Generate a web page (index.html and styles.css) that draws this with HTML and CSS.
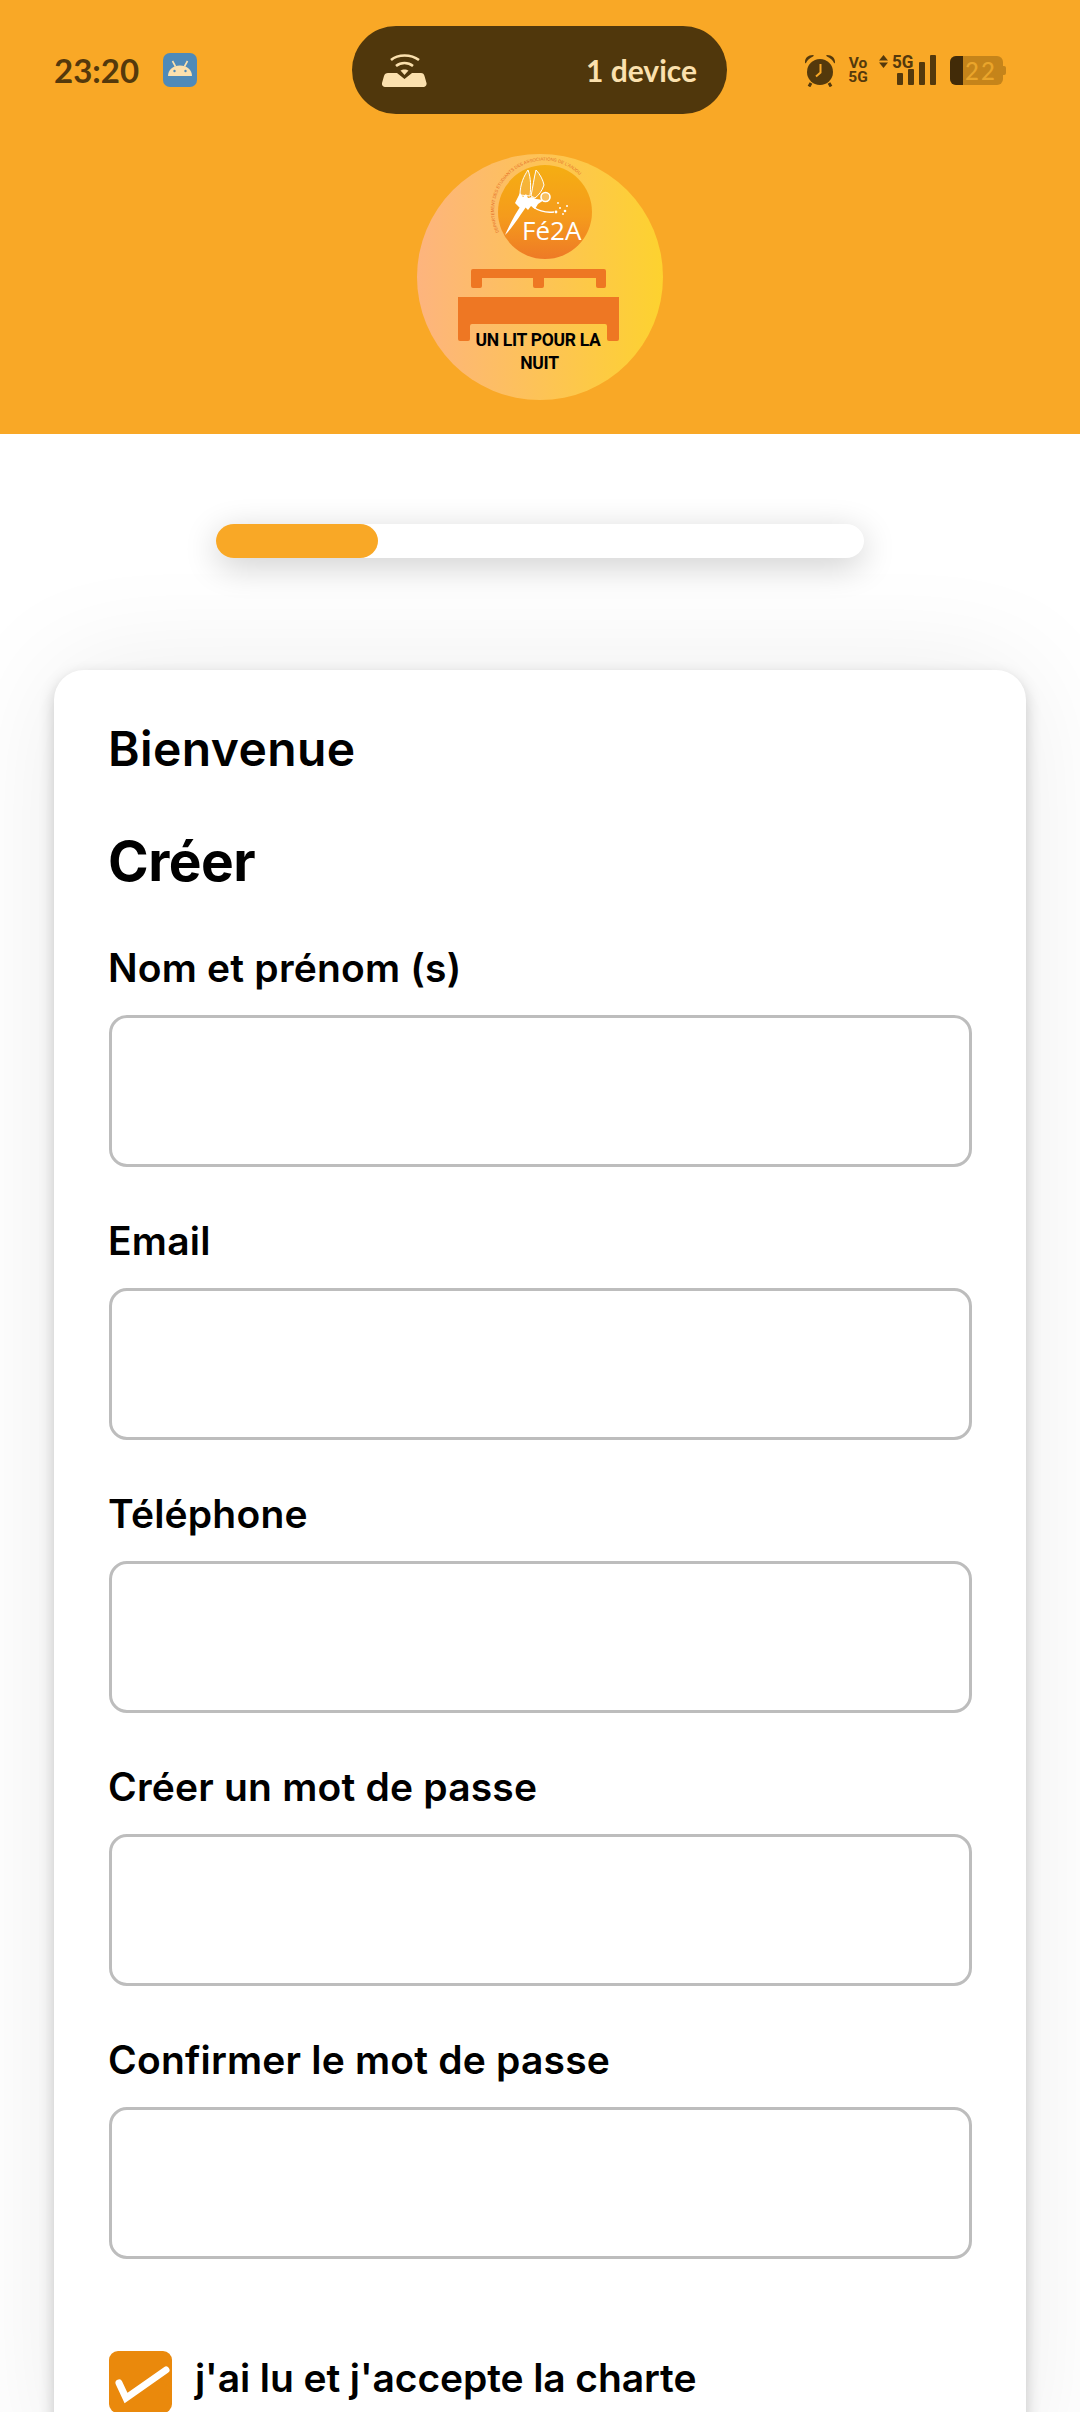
FILE: index.html
```html
<!DOCTYPE html>
<html lang="fr">
<head>
<meta charset="utf-8">
<title>Un lit pour la nuit</title>
<link rel="stylesheet" href="styles.css">
</head>
<body>
<header class="top">
  <div class="status">
    <div class="status-left">
      <span class="clock">23:20</span>
      <span class="app-icon">
        <svg viewBox="0 0 34 34" width="34" height="34"><rect width="34" height="34" rx="7" fill="#4f8ab9"/><path d="M5 23c0-6 5-10.500 12-10.500S29 17 29 23z" fill="#fbe0ae"/><path d="M9.500 8l3 5.500M24.500 8l-3 5.500" stroke="#fbe0ae" stroke-width="1.6"/><circle cx="11.500" cy="18" r="1.200" fill="#4f8ab9"/><circle cx="22.500" cy="18" r="1.200" fill="#4f8ab9"/></svg>
      </span>
    </div>
    <div class="pill">
      <svg viewBox="0 0 45 34" width="45" height="34"><path d="M9 7C16 1 29 1 37 7" fill="none" stroke="#fbe0ae" stroke-width="2.600"/><path d="M14 13c5-4 12-4 17 0" fill="none" stroke="#fbe0ae" stroke-width="2.600"/><path d="M18.500 17.500c2-1.500 6-1.500 8 0l-4 4.500z" fill="#fbe0ae"/><path d="M6 20h9l7.500 6 7.500-6h9c2 0 3 1 3.500 3l2 7c.5 2-1 4-3 4H3c-2 0-3.500-2-3-4l2-7c.5-2 2-3 4-3z" fill="#fbe0ae"/></svg>
      <span class="pill-text">1 device</span>
    </div>
    <div class="status-right">
      <svg class="alarm" viewBox="0 0 32 33" width="32" height="33"><circle cx="16" cy="18" r="13" fill="#54390c"/><path d="M1 8c0-4 3-7 8-7 1 0 1 1 0 1.500C6 4 3 6 2 9c-.5.500-1 .500-1-1zM31 8c0-4-3-7-8-7-1 0-1 1 0 1.500 3 1.500 6 3.500 7 6.500.5.500 1 .500 1-1z" fill="#54390c"/><path d="M16.500 10v8.500l-4.500 4" fill="none" stroke="#faa826" stroke-width="2"/><path d="M7 29l-2 3.500M25 29l2 3.500" stroke="#54390c" stroke-width="3"/></svg>
      <span class="volte"><span>Vo</span><span>5G</span></span>
      <span class="signal">
        <svg class="arrows" viewBox="0 0 9 13" width="9" height="13"><path d="M4.500 0L9 5.500H0zM0 7.500h9L4.500 13z" fill="#54390c"/></svg>
        <span class="five-g">5G</span>
        <span class="bars"><i class="b1"></i><i class="b2"></i><i class="b3"></i><i class="b4"></i></span>
      </span>
      <span class="battery"><span class="battery-level"></span><span class="battery-num">22</span><span class="battery-tip"></span></span>
    </div>
  </div>
  <div class="logo">
    <svg viewBox="0 0 246 246" width="246" height="246">
      <defs>
        <linearGradient id="bg" x1="0" x2="1" y1="0" y2="0"><stop offset="0" stop-color="#fdb47e"/><stop offset="1" stop-color="#fdd22f"/></linearGradient>
        <linearGradient id="ball" x1="0" x2="0" y1="0" y2="1"><stop offset="0" stop-color="#f5ae12"/><stop offset=".55" stop-color="#f59b1c"/><stop offset="1" stop-color="#ee7a26"/></linearGradient>
        <path id="arc" d="M82 78A50 50 0 0 1 166 25"/>
      </defs>
      <circle cx="123" cy="123" r="123" fill="url(#bg)"/>
      <circle cx="128" cy="58" r="47" fill="url(#ball)"/>
      <text class="arc-text"><textPath href="#arc" textLength="140" lengthAdjust="spacingAndGlyphs">DEPARTEMENT DES ETUDIANTS DES ASSOCIATIONS DE L'ANJOU</textPath></text>
      <path d="M103 41C103 30 107 22 111 16 114 24 114 33 113 42z" fill="#fff" fill-opacity=".15" stroke="#fff" stroke-width="1"/>
      <path d="M114 42C116 32 117 24 119 16 123 20 126 26 127 31 125 37 122 41 118 44z" fill="#fff" fill-opacity=".12" stroke="#fff" stroke-width="1"/>
      <path d="M98 49l5-10 3 4 3-3 2 4 4-1 4 2 8 1-6 4-3 5-4-3-3 4-4-4-3 3z" fill="#fff"/>
      <path d="M88 81C93 70 99 58 106 49l5 1C104 60 96 73 88 81z" fill="#fff"/>
      <path d="M116 53c6 4 13 6 21 5" fill="none" stroke="#fff" stroke-width="1.400"/>
      <circle cx="128.500" cy="43" r="4.500" fill="#f8c060" stroke="#fff" stroke-width="1.600"/>
      <g fill="#fff"><circle cx="139" cy="58" r="1.400"/><circle cx="143" cy="54" r="1"/><circle cx="148" cy="57" r="1.300"/><circle cx="141" cy="49" r=".9"/><circle cx="150" cy="52" r="1"/><circle cx="146" cy="60" r=".9"/></g>
      <text class="fea" x="105" y="86">Fé2A</text>
      <path class="bed" d="M54 117a2 2 0 0 1 2-2H187a2 2 0 0 1 2 2v15a2 2 0 0 1-2 2h-6a2 2 0 0 1-2-2v-8H127v8a2 2 0 0 1-2 2h-7a2 2 0 0 1-2-2v-8H65v8a2 2 0 0 1-2 2h-7a2 2 0 0 1-2-2z"/>
      <path class="bed" d="M41 143H202v42a2 2 0 0 1-2 2h-8a2 2 0 0 1-2-2v-13a2 2 0 0 0-2-2H55a2 2 0 0 0-2 2v13a2 2 0 0 1-2 2h-8a2 2 0 0 1-2-2z"/>
      <text class="bed-text" x="121" y="192">UN LIT POUR LA</text>
      <text class="bed-text" x="122.500" y="215">NUIT</text>
    </svg>
  </div>
</header>

<div class="progress-wrap">
  <div class="progress"><div class="progress-fill"></div></div>
</div>

<main class="card">
  <h2 class="welcome">Bienvenue</h2>
  <h1 class="title">Créer</h1>
  <form class="fields">
    <div class="field"><label class="label">Nom et prénom (s)</label><div class="input"></div></div>
    <div class="field"><label class="label">Email</label><div class="input"></div></div>
    <div class="field"><label class="label">Téléphone</label><div class="input"></div></div>
    <div class="field"><label class="label">Créer un mot de passe</label><div class="input"></div></div>
    <div class="field"><label class="label">Confirmer le mot de passe</label><div class="input"></div></div>
  </form>
  <div class="accept">
    <span class="check">
      <svg viewBox="0 0 63 62" width="63" height="62"><path d="M10 32l7 15L57 19" fill="none" stroke="#fff" stroke-width="7" stroke-linecap="round" stroke-linejoin="miter"/></svg>
    </span>
    <span class="accept-text">j'ai lu et j'accepte la charte</span>
  </div>
</main>
</body>
</html>
```
FILE: styles.css
```css
* { box-sizing: border-box; }
html, body { margin: 0; padding: 0; }
body {
  width: 1080px;
  height: 2412px;
  overflow: hidden;
  background: #fff;
  color: #000;
  font-family: Inter, "Liberation Sans", Arial, sans-serif;
}
.top { height: 434px; background: #f9a826; display: flex; flex-direction: column; }
.status { height: 154px; padding: 26px 0 0 54px; display: flex; align-items: flex-start; }
.status-left { width: 298px; height: 88px; display: flex; align-items: center; gap: 24px; }
.clock {
  font-family: Lato, sans-serif;
  font-size: 33px;
  font-weight: 700;
  color: #54390c;
  width: 85px;
  white-space: nowrap;
}
.app-icon { display: flex; width: 34px; height: 34px; }
.pill {
  width: 375px;
  height: 88px;
  border-radius: 44px;
  background: #50370c;
  display: flex;
  align-items: center;
  justify-content: space-between;
  padding: 0 30px;
}
.pill-text {
  font-family: Lato, sans-serif;
  font-size: 30px;
  font-weight: 700;
  color: #fbe0ae;
}
.status-right { margin-left: 77px; height: 88px; display: flex; align-items: center; color: #54390c; }
.alarm { display: block; }
.volte {
  margin-left: 14px;
  width: 16px;
  display: flex;
  flex-direction: column;
  align-items: center;
  font-family: Roboto, sans-serif;
  font-weight: 700;
  font-size: 15.5px;
  line-height: 14.5px;
}
.signal { margin-left: 13px; position: relative; width: 57px; height: 30px; }
.arrows { position: absolute; left: 0; top: 0; display: block; }
.five-g {
  position: absolute;
  left: 13px;
  top: -1px;
  font-family: Roboto, sans-serif;
  font-weight: 700;
  font-size: 18px;
  line-height: 16px;
  transform: scaleX(.95);
  transform-origin: left top;
}
.bars { position: absolute; left: 18px; top: 0; bottom: 0; width: 39px; display: flex; align-items: flex-end; gap: 5px; }
.bars i { display: block; width: 6px; background: #54390c; border-radius: 1px; }
.bars .b1 { height: 12px; }
.bars .b2 { height: 16px; }
.bars .b3 { height: 23px; }
.bars .b4 { height: 30px; }
.battery {
  margin-left: 14px;
  position: relative;
  width: 53px;
  height: 29px;
  border-radius: 6px;
  background: #c5841a;
  display: flex;
}
.battery-level { width: 13px; background: #422b08; border-radius: 6px 0 0 6px; }
.battery-num {
  position: absolute;
  left: 15px;
  top: 0;
  font-family: Lato, sans-serif;
  font-size: 24px;
  line-height: 29px;
  font-weight: 500;
  color: #eaa52b;
  letter-spacing: 2px;
}
.battery-tip { position: absolute; right: -3px; top: 10px; width: 3px; height: 9px; background: #c5841a; border-radius: 0 2px 2px 0; }
.logo { display: flex; justify-content: center; }
.logo svg { display: block; }
.arc-text { font-size: 4.4px; fill: #e56f28; font-family: "Liberation Sans", sans-serif; }
.fea { font-family: "Open Sans", sans-serif; font-size: 26px; font-weight: 500; fill: #fff; }
.bed { fill: #ee7723; }
.bed-text { font-family: Roboto, sans-serif; font-weight: 700; font-size: 17.5px; letter-spacing: -.3px; fill: #000; text-anchor: middle; }
.progress-wrap { padding: 90px 216px 0; height: 236px; }
.progress {
  height: 34px;
  border-radius: 18px / 17px;
  background: #fff;
  box-shadow: 0 8px 34px rgba(0, 0, 0, .2);
}
.progress-fill { width: 162px; height: 100%; border-radius: 18px / 17px; background: #f9a826; }
.card {
  margin: 0 54px;
  height: 1800px;
  padding: 51px 54px 0 55px;
  border-radius: 30px;
  background: #fff;
  box-shadow: 0 6px 16px rgba(0, 0, 0, .2), 0 0 120px rgba(0, 0, 0, .08);
}
.welcome { margin: 0 0 0 -1px; font-size: 48px; line-height: 56px; font-weight: 600; letter-spacing: .4px; }
.title { margin: 52px 0 0 -1px; font-size: 55px; line-height: 64px; font-weight: 700; letter-spacing: -.5px; }
.fields { display: flex; flex-direction: column; gap: 52px; margin-top: 53px; }
.field { display: flex; flex-direction: column; gap: 25px; }
.label { margin-left: -1px; font-size: 39px; line-height: 44px; font-weight: 600; letter-spacing: .2px; }
.input { height: 152px; border: 3px solid #bdbdbd; border-radius: 18px; }
.accept { display: flex; align-items: flex-start; gap: 23px; margin-top: 92px; }
.check { width: 63px; height: 62px; border-radius: 9px; background: #ea890c; flex: none; }
.check svg { display: block; }
.accept-text { font-size: 39px; line-height: 46px; font-weight: 600; margin-top: 4px; letter-spacing: -.1px; white-space: nowrap; }
```
